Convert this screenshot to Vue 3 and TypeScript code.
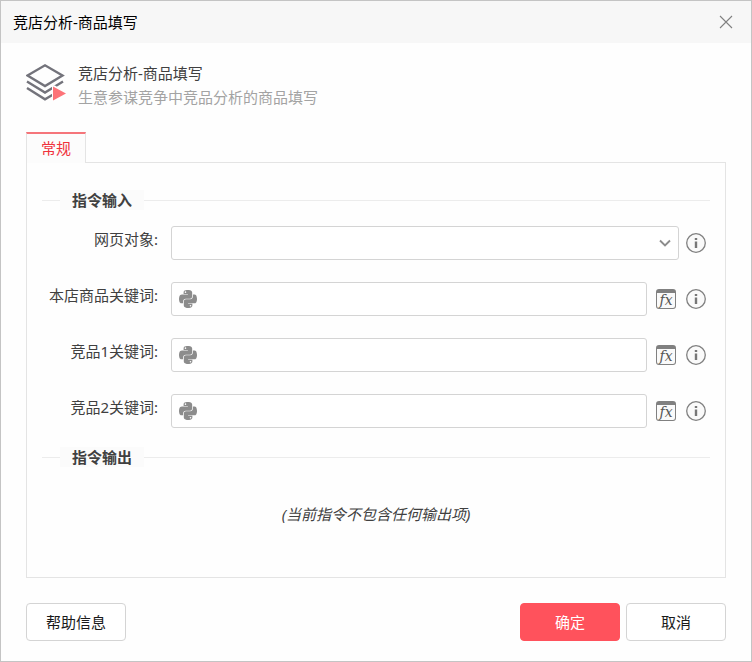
<script setup lang="ts">
import { ref } from 'vue'

interface Field {
  id: string
  label: string
  value: string
}

const webPage = ref('')
const fields = ref<Field[]>([
  { id: 'own-keyword', label: '本店商品关键词:', value: '' },
  { id: 'rival-1', label: '竞品1关键词:', value: '' },
  { id: 'rival-2', label: '竞品2关键词:', value: '' },
])
</script>

<template>
  <form class="dialog" @submit.prevent>
    <header class="titlebar">
      <span>竞店分析-商品填写</span>
      <button type="button" class="bare" aria-label="关闭">
        <svg width="14" height="14" viewBox="0 0 14 14">
          <path d="M1 1 13 13M13 1 1 13" fill="none" stroke="#808080" stroke-width="1.1" />
        </svg>
      </button>
    </header>

    <section class="intro">
      <svg class="layers" width="40" height="40" viewBox="0 0 40 40">
        <g fill="none" stroke="#73737b" stroke-width="2.4">
          <path d="M1.5 14.5 19 4.3 36.5 14.5 19 25z" />
          <path d="M1 20.5 19 31.5 37 20.5" />
          <path d="M1 27 19 38.3 28 33" />
        </g>
        <path d="M26 24V40H40V32L37 29.5 32 26.5 29 24.5z" fill="#fefefe" />
        <path d="M27 25.5V39.5L40 32.5z" fill="#fd7378" />
      </svg>
      <div>
        <h1>竞店分析-商品填写</h1>
        <p>生意参谋竞争中竞品分析的商品填写</p>
      </div>
    </section>

    <nav class="tabs" role="tablist">
      <button type="button" class="tab" role="tab" aria-selected="true">常规</button>
    </nav>

    <main class="panel">
      <h2 class="group"><span>指令输入</span></h2>
      <div class="rows">
        <div class="row wide">
          <label for="web-page">网页对象:</label>
          <div class="box">
            <select id="web-page" v-model="webPage">
              <option value=""></option>
            </select>
            <svg class="chevron" width="12" height="8" viewBox="0 0 12 8">
              <path d="M1 1.5 6 6.5 11 1.5" fill="none" stroke="#8c8c8c" stroke-width="1.9" />
            </svg>
          </div>
          <button type="button" class="bare" aria-label="说明">
            <svg width="20" height="20" viewBox="0 0 20 20">
              <circle cx="10" cy="10" r="9.3" fill="#fafafa" stroke="#808080" stroke-width="1.3" />
              <path d="M8.8 5h2.400v2H8.800zM8.800 8.500h2.400V15H8.800z" fill="#777" />
            </svg>
          </button>
        </div>
        <div v-for="field in fields" :key="field.id" class="row">
          <label :for="field.id">{{ field.label }}</label>
          <div class="box">
            <svg class="python" width="18" height="18" viewBox="0 32 448 448">
              <path
                fill="#8c8c8c"
                d="M439.8 200.5c-7.7-30.9-22.3-54.2-53.4-54.2h-40.1v47.4c0 36.8-31.2 67.8-66.8 67.8H172.7c-29.2 0-53.4 25-53.4 54.3v101.8c0 29 25.2 46 53.4 54.3 33.8 9.9 66.3 11.7 106.8 0 26.9-7.8 53.4-23.5 53.4-54.3v-40.7H226.2v-13.6h160.2c31.1 0 42.6-21.7 53.4-54.2 11.2-33.5 10.7-65.7 0-108.6zM286.2 404c11.1 0 20.1 9.1 20.1 20.3 0 11.3-9 20.4-20.1 20.4-11 0-20.1-9.2-20.1-20.4.1-11.3 9.1-20.3 20.1-20.3zM167.8 248.1h106.8c29.7 0 53.4-24.5 53.4-54.3V91.9c0-29-24.4-50.7-53.4-55.6-35.8-5.9-74.7-5.6-106.8.1-45.2 8-53.4 24.7-53.4 55.6v40.7h106.9v13.6h-147c-31.1 0-58.3 18.7-66.8 54.2-9.8 40.7-10.2 66.1 0 108.6 7.6 31.6 25.7 54.2 56.8 54.2H101v-48.8c0-35.3 30.5-66.4 66.8-66.4zm-6.7-142.6c-11.1 0-20.1-9.1-20.1-20.3.1-11.3 9-20.4 20.1-20.4 11 0 20.1 9.2 20.1 20.4s-9 20.3-20.1 20.3z"
              />
            </svg>
            <input :id="field.id" v-model="field.value" type="text" />
          </div>
          <button type="button" class="fx">fx</button>
          <button type="button" class="bare" aria-label="说明">
            <svg width="20" height="20" viewBox="0 0 20 20">
              <circle cx="10" cy="10" r="9.3" fill="#fafafa" stroke="#808080" stroke-width="1.3" />
              <path d="M8.8 5h2.400v2H8.800zM8.800 8.500h2.400V15H8.800z" fill="#777" />
            </svg>
          </button>
        </div>
      </div>

      <h2 class="group"><span>指令输出</span></h2>
      <p class="empty">(当前指令不包含任何输出项)</p>
    </main>

    <footer class="actions">
      <button type="button" class="btn help">帮助信息</button>
      <button type="submit" class="btn primary">确定</button>
      <button type="button" class="btn">取消</button>
    </footer>
  </form>
</template>

<style>
body {
  margin: 0;
}
</style>

<style scoped>
* {
  box-sizing: border-box;
}

.dialog {
  display: flex;
  flex-direction: column;
  min-height: 100vh;
  border: 1px solid #c4c4c4;
  background: #fefefe;
  color: #404040;
  font: 15px/24px "Noto Sans", "Noto Sans CJK SC", sans-serif;
}

button,
input,
select {
  margin: 0;
  padding: 0;
  color: inherit;
  font: inherit;
}

svg {
  display: block;
  flex: none;
}

.bare {
  border: 0;
  background: none;
}

.titlebar {
  display: flex;
  align-items: center;
  justify-content: space-between;
  height: 42px;
  padding: 0 18px 0 12px;
  background: #f7f7f7;
  color: #000;
}

.intro {
  display: flex;
  gap: 12px;
  padding: 18px 25px 0;
}

h1,
h2,
p {
  margin: 0;
  font-size: 15px;
  font-weight: 400;
}

.intro p {
  color: #a3a3a3;
}

.tabs {
  display: flex;
  margin: 23px 25px 0;
}

.tab {
  position: relative;
  width: 60px;
  height: 31px;
  margin-bottom: -1px;
  padding-bottom: 2px;
  border: 1px solid #e4e4e4;
  border-width: 2px 1px 0;
  border-top-color: #f5757a;
  background: #fcfcfc;
  color: #f0323c;
}

.panel {
  flex: 1;
  margin: 0 25px;
  padding: 25px 15px;
  border: 1px solid #e4e4e4;
}

.group {
  display: flex;
  align-items: center;
  height: 24px;
  font-weight: 700;
  line-height: 20px;
}

.group span {
  padding: 0 12px;
  background: #fbfbfb;
}

.group::before,
.group::after {
  content: "";
  width: 18px;
  height: 1px;
  background: #ececec;
}

.group::after {
  flex: 1;
}

.rows {
  display: grid;
  gap: 22px;
  padding: 14px 4px 17px 0;
}

.row {
  display: flex;
  align-items: center;
  gap: 10px;
}

.row label {
  align-self: flex-start;
  width: 116px;
  margin-right: 3px;
  line-height: 26px;
  text-align: right;
}

.box {
  position: relative;
  display: flex;
  flex: 1;
  align-items: center;
  height: 34px;
  border: 1px solid #d4d4d4;
  border-radius: 3px;
  background: #fff;
}

.wide .box {
  margin-right: -3px;
}

.box input,
.box select {
  flex: 1;
  min-width: 0;
  height: 100%;
  padding: 0 8px;
  border: 0;
  outline: 0;
  background: none;
  appearance: none;
}

.chevron {
  position: absolute;
  right: 7px;
  pointer-events: none;
}

.python {
  margin-left: 7px;
}

.row > button {
  width: 20px;
  height: 20px;
}

.row > .fx {
  padding-bottom: 2px;
  border: 1px solid #808080;
  border-top-width: 4px;
  border-radius: 3px;
  background: #fafafa;
  color: #555;
  font: italic 14px/12px "DejaVu Serif", serif;
}

.box + .fx {
  margin-left: -1px;
}

.empty {
  padding-top: 33px;
  font-style: italic;
  text-align: center;
}

.actions {
  display: flex;
  gap: 6px;
  padding: 25px 25px 20px;
}

.btn {
  width: 100px;
  height: 38px;
  border: 1px solid #d4d4d4;
  border-radius: 4px;
  background: #fff;
  color: #1a1a1a;
}

.help {
  margin-right: auto;
}

.primary {
  border-color: #ff525c;
  background: #ff525c;
  color: #fff;
}
</style>
